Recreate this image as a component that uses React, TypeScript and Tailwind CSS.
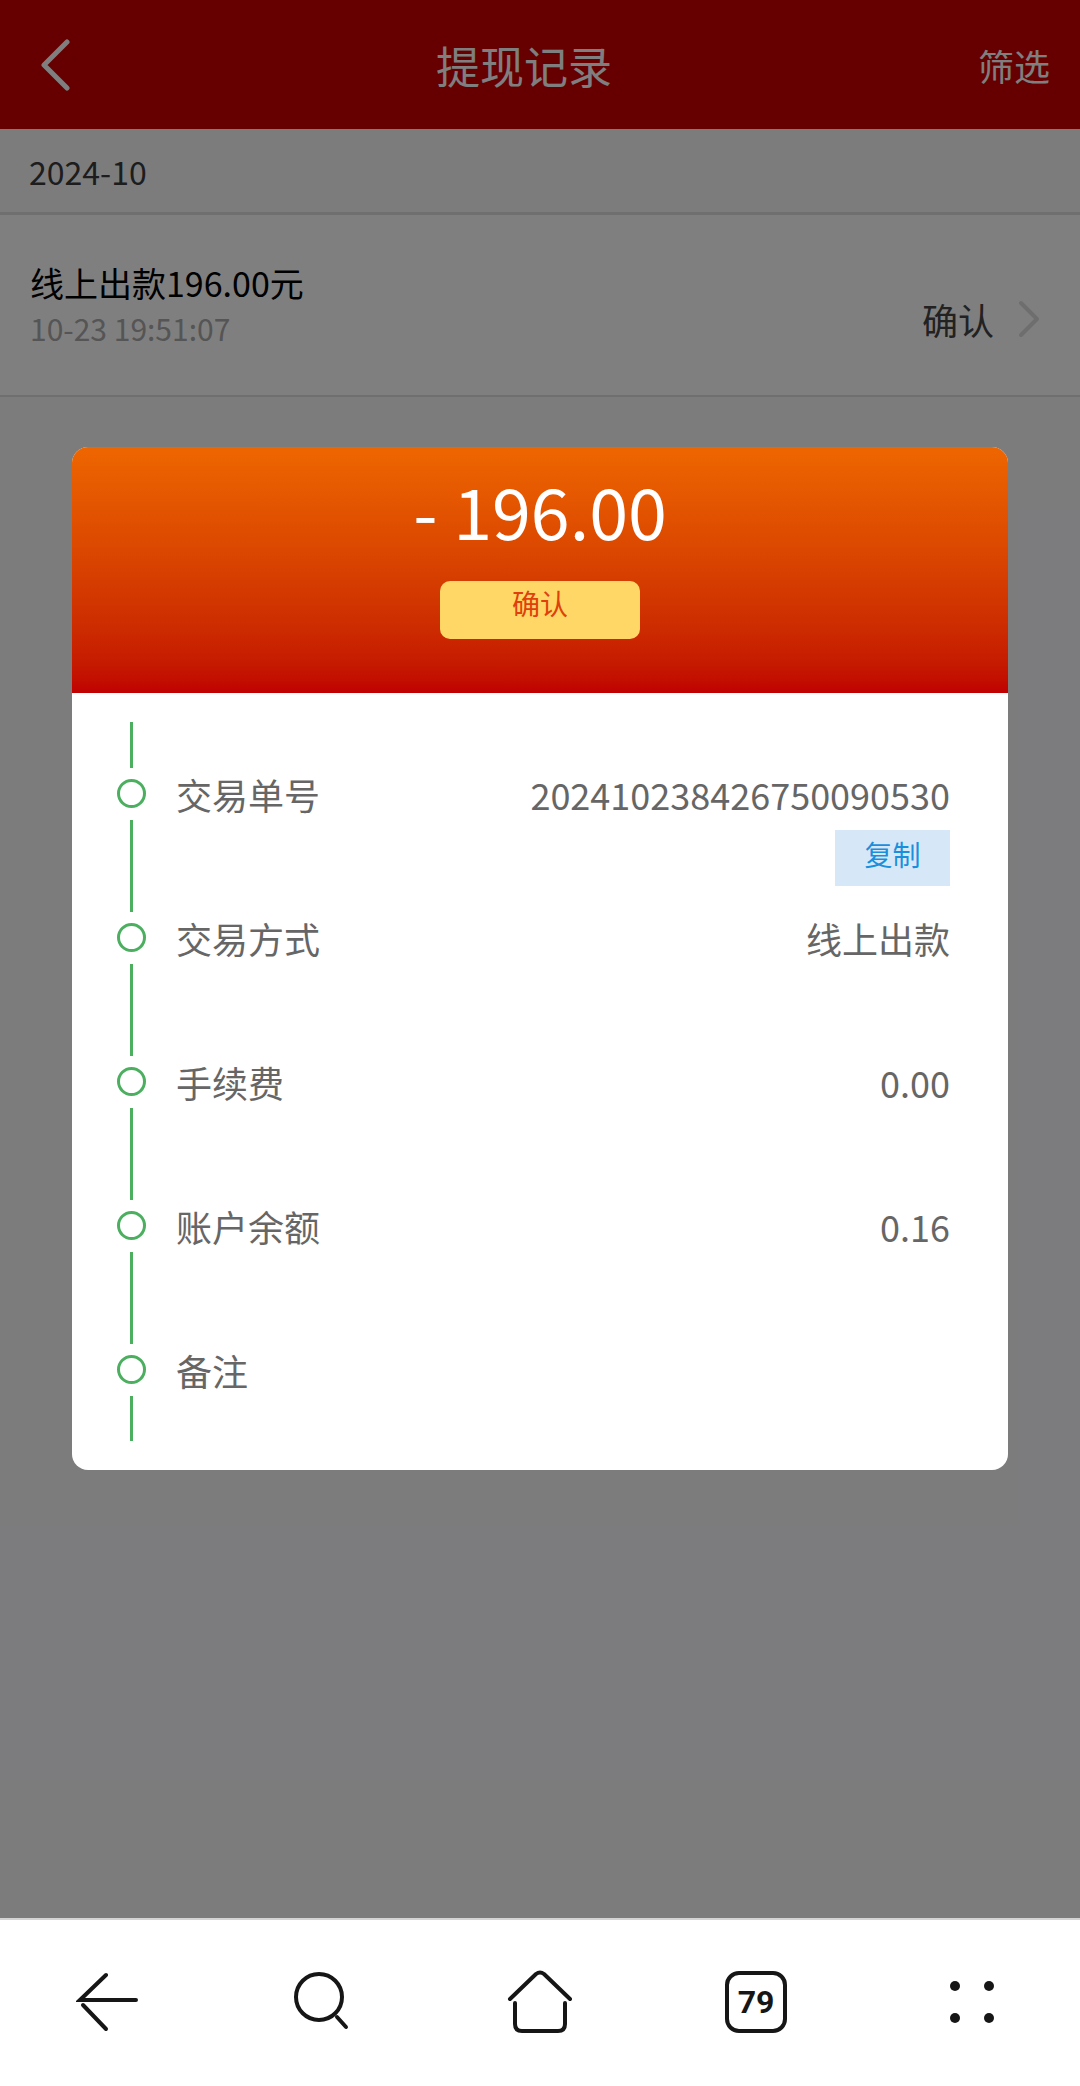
const FONT = "font-['Noto_Sans_CJK_SC','Noto_Sans',sans-serif]";

const details = [
  { label: '交易单号', value: '20241023842675009053 0'.replace(' ', ''), copy: true },
  { label: '交易方式', value: '线上出款' },
  { label: '手续费', value: '0.00' },
  { label: '账户余额', value: '0.16' },
  { label: '备注', value: '' },
];

function Timeline() {
  return (
    <div className="flex w-[29px] flex-col items-center">
      <div className="h-[46px] w-[3px] bg-[#4caf60]" />
      {details.map((d, i) => (
        <div key={d.label} className="flex flex-col items-center">
          <div className="mt-[11px] h-[29px] w-[29px] rounded-full border-[3px] border-[#4caf60]" />
          <div className={`mt-[12px] w-[3px] bg-[#4caf60] ${i === details.length - 1 ? 'h-[45px]' : 'h-[92px]'}`} />
        </div>
      ))}
    </div>
  );
}

function BottomNav() {
  return (
    <nav className="grid h-[168px] grid-cols-5 items-center border-t-2 border-[#d4d4d4] bg-white pb-[2px] text-[#161616]">
      <div className="flex justify-center">
        <svg width="64" height="60" viewBox="0 0 64 60" fill="none" stroke="currentColor" strokeWidth="4" strokeLinecap="round">
          <path d="M30 3 L4 28 H60" />
          <path d="M7 33 L30 57" />
        </svg>
      </div>
      <div className="flex justify-center">
        <svg width="64" height="62" viewBox="0 0 64 62" fill="none" stroke="currentColor" strokeWidth="4" strokeLinecap="round" className="mr-[4px]">
          <circle cx="29" cy="26" r="23" />
          <path d="M47 46 L56 56" />
        </svg>
      </div>
      <div className="flex justify-center">
        <svg width="66" height="64" viewBox="0 0 66 64" fill="none" stroke="currentColor" strokeWidth="4" strokeLinecap="round" strokeLinejoin="round">
          <path d="M3 29 L29 4 Q33 1 37 4 L63 29" />
          <path d="M8 33 V54 Q8 61 15 61 H51 Q58 61 58 54 V33" />
        </svg>
      </div>
      <div className="flex justify-center">
        <div className="flex h-[62px] w-[62px] items-center justify-center rounded-[14px] border-4 border-[#161616] font-['Roboto',sans-serif] text-[32px] font-bold leading-none">
          79
        </div>
      </div>
      <div className="flex justify-center">
        <div className="grid grid-cols-2 gap-x-[24px] gap-y-[22px]">
          <div className="h-[10px] w-[10px] rounded-full bg-[#161616]" />
          <div className="h-[10px] w-[10px] rounded-full bg-[#161616]" />
          <div className="h-[10px] w-[10px] rounded-full bg-[#161616]" />
          <div className="h-[10px] w-[10px] rounded-full bg-[#161616]" />
        </div>
      </div>
    </nav>
  );
}

export default function App() {
  return (
    <div className={`relative flex h-[2086px] w-[1080px] flex-col overflow-hidden bg-[#f8f8fb] ${FONT}`}>
      {/* page under the dialog */}
      <header className="flex h-[129px] items-center justify-between bg-[#cc0000] pl-[40px] pr-[30px] text-white">
        <svg width="30" height="52" viewBox="0 0 30 52" fill="none" stroke="currentColor" strokeWidth="5" strokeLinecap="round" strokeLinejoin="round">
          <path d="M27 3 L4 26 L27 49" />
        </svg>
        <h1 className="text-[44px] font-normal leading-none">提现记录</h1>
        <span className="text-[36px] leading-none">筛选</span>
      </header>

      <div className="flex h-[86px] items-center border-b-[3px] border-[#dfdfdf] pl-[29px] text-[32px] text-[#3a3a3a]">2024-10</div>

      <div className="flex h-[182px] items-center justify-between border-b-[2px] border-[#dfdfdf] bg-white pl-[30px] pr-[40px]">
        <div>
          <div className="text-[34px] leading-[46px] text-black">线上出款196.00元</div>
          <div className="text-[30px] leading-[44px] text-[#aaaaaa]">10-23 19:51:07</div>
        </div>
        <div className="mt-[28px] flex items-center gap-[24px]">
          <span className="text-[36px] leading-none text-[#444444]">确认</span>
          <svg width="22" height="38" viewBox="0 0 22 38" fill="none" stroke="#dcdcdc" strokeWidth="4" strokeLinecap="round" strokeLinejoin="round">
            <path d="M3 3 L19 19 L3 35" />
          </svg>
        </div>
      </div>

      <div className="flex-1" />
      <BottomNav />

      {/* dialog */}
      <div className="absolute inset-x-0 top-0 h-[1918px] bg-black/50 pt-[447px]">
        <div className="mx-auto h-[1023px] w-[936px] overflow-hidden rounded-[16px] bg-white">
          <div className="flex h-[246px] flex-col items-center bg-gradient-to-b from-[#ee6600] to-[#c00000] pt-[24px]">
            <div className="text-[70px] leading-[78px] text-white">- 196.00</div>
            <div className="mt-[32px] flex h-[58px] w-[200px] justify-center rounded-[10px] bg-[#ffd766] pt-[4px] text-[28px] leading-[36px] text-[#e0400c]">确认</div>
          </div>
          <div className="flex pl-[45px] pr-[58px] pt-[29px]">
            <Timeline />
            <div className="ml-[30px] flex-1 pt-[54px]">
              {details.map((d) => (
                <div key={d.label} className="h-[144px]">
                  <div className="flex items-center justify-between text-[36px] leading-[36px] text-[#666666]">
                    <span>{d.label}</span>
                    <span>{d.value}</span>
                  </div>
                  {d.copy && (
                    <div className="ml-auto mt-[18px] flex h-[56px] w-[115px] justify-center bg-[#d6e8f8] pt-[6px] text-[28px] leading-[36px] text-[#1a8fdc]">复制</div>
                  )}
                </div>
              ))}
            </div>
          </div>
        </div>
      </div>
    </div>
  );
}
